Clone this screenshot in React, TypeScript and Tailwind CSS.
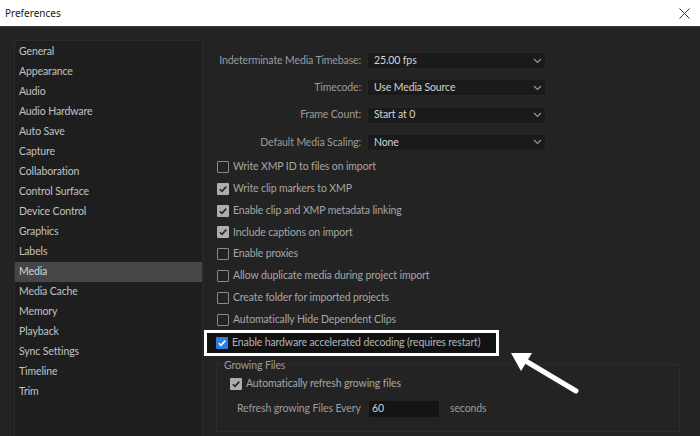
import React from 'react'

const categories = [
  'General', 'Appearance', 'Audio', 'Audio Hardware', 'Auto Save', 'Capture',
  'Collaboration', 'Control Surface', 'Device Control', 'Graphics', 'Labels',
  'Media', 'Media Cache', 'Memory', 'Playback', 'Sync Settings', 'Timeline', 'Trim',
]

const dropdowns = [
  { label: 'Indeterminate Media Timebase:', value: '25.00 fps' },
  { label: 'Timecode:', value: 'Use Media Source' },
  { label: 'Frame Count:', value: 'Start at 0' },
  { label: 'Default Media Scaling:', value: 'None' },
]

const options = [
  { label: 'Write XMP ID to files on import', checked: false },
  { label: 'Write clip markers to XMP', checked: true },
  { label: 'Enable clip and XMP metadata linking', checked: true },
  { label: 'Include captions on import', checked: true },
  { label: 'Enable proxies', checked: false },
  { label: 'Allow duplicate media during project import', checked: false },
  { label: 'Create folder for imported projects', checked: false },
  { label: 'Automatically Hide Dependent Clips', checked: false },
]

function Check({ checked, blue }: { checked: boolean; blue?: boolean }) {
  if (!checked) {
    return <div className="w-[12px] h-[12px] shrink-0 border border-[#8a8a8a] rounded-[1px]" />
  }
  return (
    <div className={`w-[12px] h-[12px] shrink-0 rounded-[1px] flex items-center justify-center ${blue ? 'bg-[#2f7de1]' : 'bg-[#adadad]'}`}>
      <svg width="10" height="10" viewBox="0 0 10 10">
        <path d="M1.8 5.2 L4 7.4 L8.3 2.6" fill="none" stroke={blue ? '#ffffff' : '#262626'} strokeWidth="1.6" />
      </svg>
    </div>
  )
}

function Chevron() {
  return (
    <svg width="9" height="6" viewBox="0 0 9 6">
      <path d="M1 1 L4.5 4.5 L8 1" fill="none" stroke="#9a9a9a" strokeWidth="1.1" />
    </svg>
  )
}

export default function App() {
  return (
    <div
      className="relative w-[700px] h-[436px] overflow-hidden bg-[#232323] flex flex-col text-[10.5px] tracking-[-0.12px]"
      style={{ fontFamily: 'Lato, "Noto Sans", sans-serif' }}
    >
      {/* Title bar */}
      <div className="h-[27px] shrink-0 bg-white border-b border-[#3e3e3e] flex items-center justify-between pl-[5px] pr-[10px]">
        <span className="text-[10px] tracking-normal text-[#1a1a1a]" style={{ fontFamily: '"Noto Sans", sans-serif' }}>Preferences</span>
        <svg width="11" height="11" viewBox="0 0 11 11">
          <path d="M0.5 0.5 L10.5 10.5 M10.5 0.5 L0.5 10.5" stroke="#333" strokeWidth="1" />
        </svg>
      </div>

      <div className="flex flex-1">
        {/* Sidebar */}
        <div className="ml-[14px] mt-[13px] w-[189px] h-[420px] shrink-0 bg-[#1e1e1e] border border-[#2c2c2c] pt-[1px]">
          {categories.map((c) => (
            <div
              key={c}
              className={`h-[20px] flex items-center pl-[4px] ${c === 'Media' ? 'bg-[#464646] text-[#d6d6d6]' : 'text-[#c2c2c2]'}`}
            >
              {c}
            </div>
          ))}
        </div>

        {/* Content */}
        <div className="pl-[14px] pt-[20px] flex flex-col">
          {dropdowns.map((d) => (
            <div key={d.label} className="h-[27.25px] flex items-center gap-[6px]">
              <div className="w-[144px] text-right text-[#9c9c9c] whitespace-nowrap">{d.label}</div>
              <div className="w-[179px] h-[17px] bg-[#1a1a1a] border border-[#262626] flex items-center justify-between pl-[6px] pr-[3px]">
                <span className="text-[#d2d2d2]">{d.value}</span>
                <Chevron />
              </div>
            </div>
          ))}

          {options.map((o) => (
            <div key={o.label} className="h-[21.85px] flex items-center gap-[4px] text-[#a6a6a6] whitespace-nowrap">
              <Check checked={o.checked} />
              <span>{o.label}</span>
            </div>
          ))}

          {/* Highlighted option */}
          <div className="-ml-[13px] -mt-[1px] w-[295px] h-[26px] border-[3px] border-white bg-[#121212] flex items-center gap-[4px] pl-[9px] text-[#b4b4b4] whitespace-nowrap">
            <Check checked blue />
            <span>Enable hardware accelerated decoding (requires restart)</span>
          </div>

          {/* Growing Files */}
          <fieldset className="-ml-[1px] mt-[1px] w-[464px] h-[75px] border border-[#2c2c2c] px-0">
            <legend className="ml-[6px] px-[1px] text-[#9c9c9c] leading-[16px]">Growing Files</legend>
            <div className="h-[22px] flex items-center gap-[4px] pl-[13px] text-[#a6a6a6] whitespace-nowrap">
              <Check checked />
              <span>Automatically refresh growing files</span>
            </div>
            <div className="h-[28px] flex items-center pl-[20px] text-[#9c9c9c] whitespace-nowrap">
              <span className="w-[132px]">Refresh growing Files Every</span>
              <div className="w-[70px] h-[16px] bg-[#141414] flex items-center pl-[3px] text-[#d2d2d2]">60</div>
              <span className="ml-[11px]">seconds</span>
            </div>
          </fieldset>
        </div>
      </div>

      {/* Annotation arrow */}
      <svg className="absolute left-0 top-0 pointer-events-none" width="700" height="436" viewBox="0 0 700 436">
        <path d="M576 391 L524 360" stroke="#ffffff" strokeWidth="5" strokeLinecap="round" />
        <polygon points="511,353 532,353 521,371" fill="#ffffff" />
      </svg>
    </div>
  )
}
